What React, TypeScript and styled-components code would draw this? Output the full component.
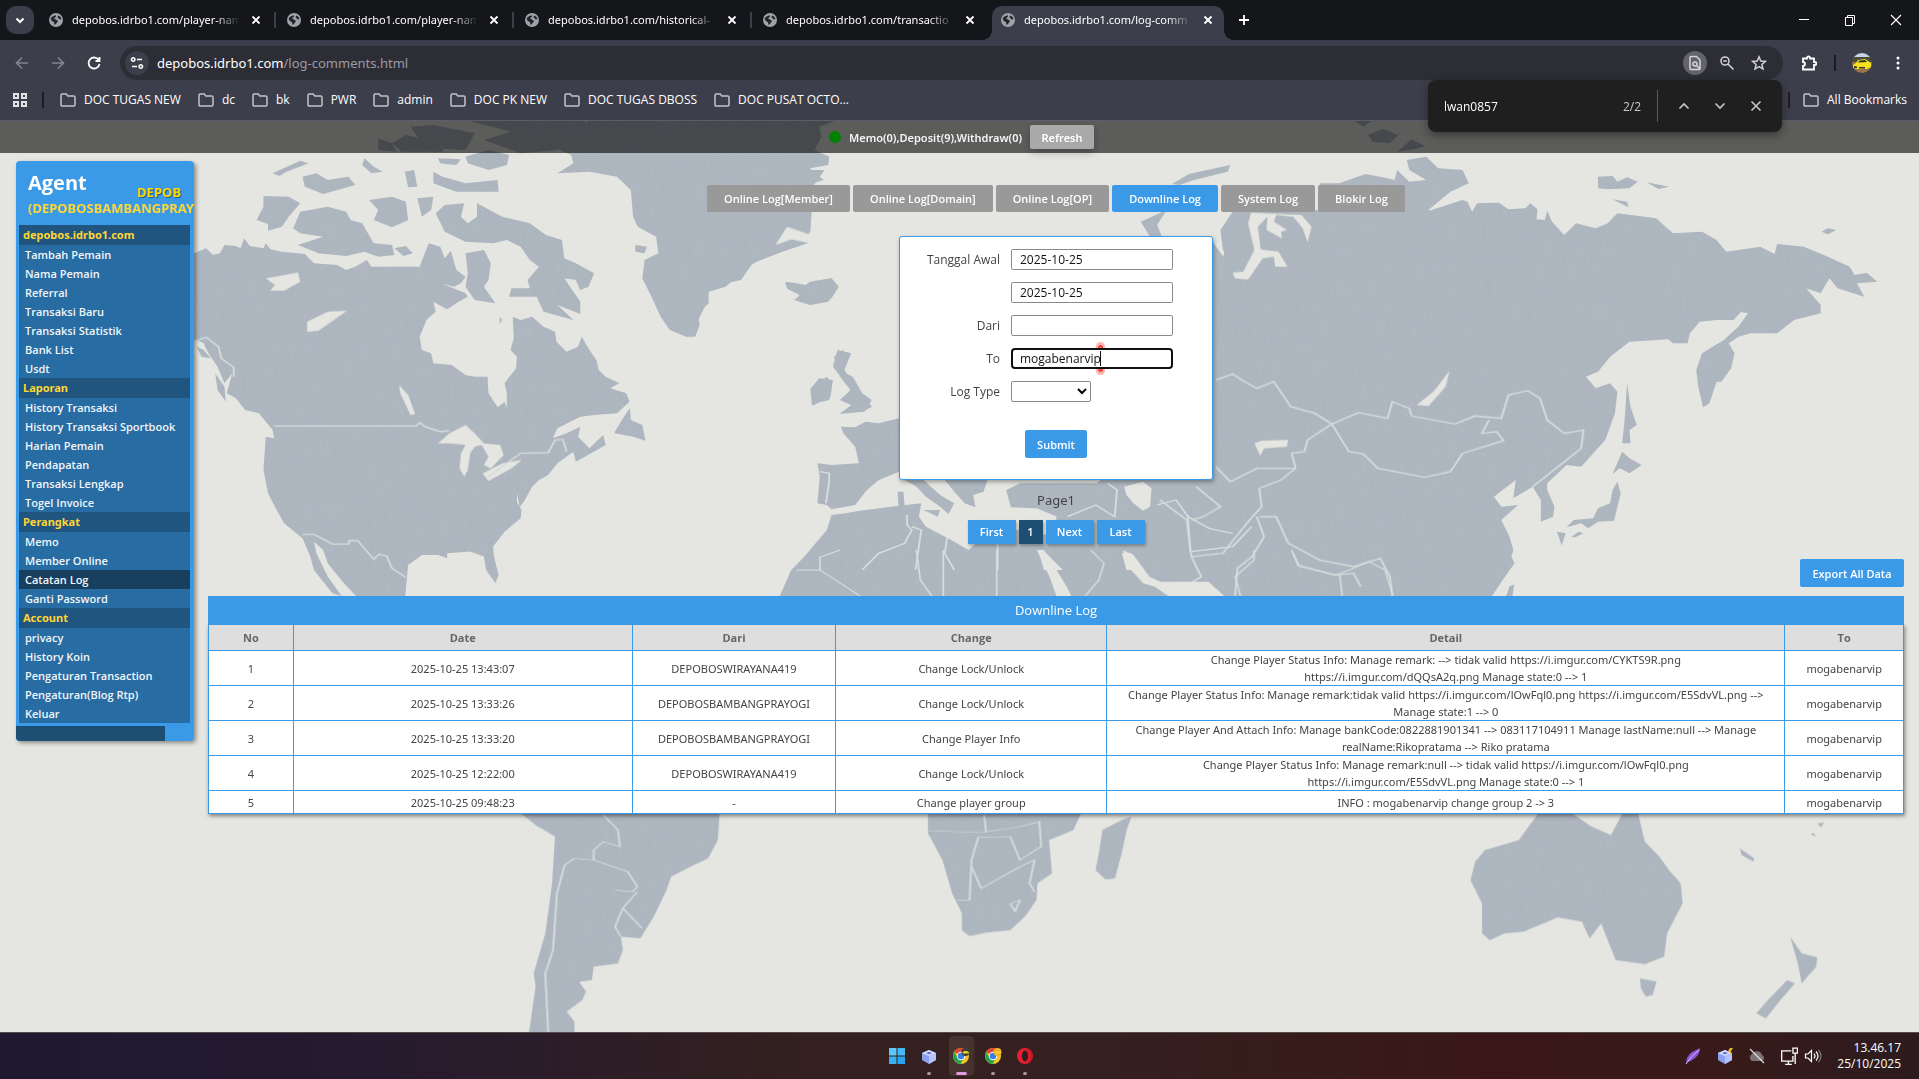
import React from "react";
import styled, { createGlobalStyle, css } from "styled-components";

const BLUE = "#3b9ae8";
const NAVY = "#1d4e74";
const FONT = '"Open Sans", "Noto Sans", sans-serif';
const FONT_WIDE = '"Noto Sans", "Open Sans", sans-serif';

const Global = createGlobalStyle`
  *, *::before, *::after { box-sizing: border-box; }
  body { margin: 0; font-family: ${FONT}; font-size: 12px; }
  button, input, select { font-family: inherit; font-size: inherit; margin: 0; }
  button { border: 0; padding: 0; background: none; color: inherit; }
  a { color: inherit; text-decoration: none; }
  ul { list-style: none; margin: 0; padding: 0; }
`;

const Screen = styled.div`
  display: flex;
  flex-direction: column;
  min-height: 100vh;
`;

/* ---------- browser frame ---------- */

const TabStrip = styled.div`
  display: flex;
  height: 40px;
  padding: 6px 0 0 6px;
  background: #15161a;
  color: #fff;
`;

const TabSearch = styled.button`
  display: grid;
  place-items: center;
  width: 28px;
  height: 28px;
  margin-right: 6px;
  border-radius: 10px;
  background: #3d3e4b;
`;

const Tab = styled.div<{ $active?: boolean; $divider?: boolean }>`
  position: relative;
  display: flex;
  align-items: center;
  gap: 8px;
  width: 232px;
  height: 34px;
  margin-right: 6px;
  padding: 0 8px 6px;
  border-radius: 10px 10px 0 0;
  ${(p) =>
    p.$active &&
    css`
      background: #3d3e4b;
      &::before,
      &::after {
        content: "";
        position: absolute;
        bottom: 0;
        width: 10px;
        height: 10px;
      }
      &::before {
        left: -10px;
        background: radial-gradient(circle at 0 0, transparent 10px, #3d3e4b 10px);
      }
      &::after {
        right: -10px;
        background: radial-gradient(circle at 100% 0, transparent 10px, #3d3e4b 10px);
      }
    `}
  ${(p) =>
    p.$divider &&
    css`
      &::after {
        content: "";
        position: absolute;
        right: -4px;
        top: 6px;
        width: 2px;
        height: 16px;
        background: #3d3e4b;
      }
    `}
`;

const TabTitle = styled.a`
  flex: 1;
  overflow: hidden;
  white-space: nowrap;
  font-family: ${FONT_WIDE};
  font-size: 11px;
  line-height: 20px;
  mask-image: linear-gradient(90deg, #000 85%, transparent);
`;

const IconButton = styled.button<{ $w: number }>`
  display: grid;
  place-items: center;
  flex: none;
  width: ${(p) => p.$w}px;
  height: 28px;
`;

const TabClose = styled.button`
  display: grid;
  place-items: center;
  width: 16px;
  height: 16px;
`;

const WindowButtons = styled.div`
  display: flex;
  margin-left: auto;
`;

const Toolbar = styled.div`
  display: flex;
  align-items: center;
  height: 46px;
  padding: 0 4px;
  background: #3d3e4b;
  color: #fff;
`;

const AddressBar = styled.div`
  display: flex;
  align-items: center;
  flex: 1;
  height: 34px;
  margin: 0 8px;
  padding: 0 12px 0 5px;
  gap: 8px;
  border-radius: 17px;
  background: #2d2d36;
`;

const Round = styled.button<{ $bg: string }>`
  display: grid;
  place-items: center;
  width: 24px;
  height: 24px;
  border-radius: 50%;
  background: ${(p) => p.$bg};
`;

const Url = styled.div`
  flex: 1;
  font-family: ${FONT_WIDE};
  font-size: 13px;
  color: #9a9ba4;
  b { font-weight: 400; color: #fff; }
`;

const Divider = styled.span`
  width: 2px;
  height: 16px;
  background: #1c1d22;
`;

const DividerSlot = styled.span<{ $w: number }>`
  display: grid;
  place-items: center;
  width: ${(p) => p.$w}px;
`;

const Bookmarks = styled.nav`
  display: flex;
  align-items: center;
  height: 35px;
  padding: 0 12px 6px;
  background: #3d3e4b;
  border-bottom: 1px solid #5d5e6b;
  color: #fff;
`;

const BookmarkList = styled.div`
  display: flex;
  gap: 17px;
  padding-left: 2px;
`;

const Bookmark = styled.a`
  display: flex;
  align-items: center;
  gap: 8px;
  line-height: 16px;
  white-space: nowrap;
`;

const BookmarkEnd = styled.div`
  display: flex;
  align-items: center;
  gap: 13px;
  margin-left: auto;
`;

const FindAnchor = styled.div`
  position: relative;
  z-index: 2;
`;

const FindBar = styled.form`
  position: absolute;
  top: -41px;
  right: 137px;
  display: flex;
  align-items: center;
  width: 354px;
  height: 52px;
  padding: 0 8px 0 16px;
  border-radius: 8px;
  background: #1f1f1f;
  color: #fff;
  box-shadow: 0 3px 8px rgba(0, 0, 0, 0.4);
`;

const FindInput = styled.input`
  flex: 1;
  min-width: 0;
  border: 0;
  padding: 0;
  outline: 0;
  background: none;
  color: #fff;
`;

const FindCount = styled.span`
  padding-right: 16px;
  color: #c8c8c8;
`;

const FindRule = styled.span`
  width: 1px;
  height: 32px;
  margin-right: 8px;
  background: #5a5a5a;
`;

/* ---------- agent page ---------- */

const Page = styled.div`
  position: relative;
  isolation: isolate;
  flex: 1;
  background: #e5e6e1;
  overflow: hidden;
`;

const MapSvg = styled.svg`
  position: absolute;
  inset: 0;
  z-index: -1;
  width: 100%;
  height: 100%;
`;

const StatusBar = styled.header`
  display: flex;
  align-items: center;
  justify-content: center;
  height: 32px;
  padding-left: 4px;
  background: rgba(0, 0, 0, 0.6);
  color: #f4f4f4;
  font-family: ${FONT_WIDE};
  font-size: 11px;
  font-weight: 600;
`;

const Dot = styled.span`
  width: 12px;
  height: 12px;
  margin-right: 8px;
  border-radius: 50%;
  background: #008200;
`;

const Refresh = styled.button`
  width: 64px;
  height: 24px;
  margin-left: 8px;
  border-radius: 2px;
  background: #a9a9a9;
  color: #fff;
  font-weight: 600;
  box-shadow: 0 3px 8px rgba(0, 0, 0, 0.25);
`;

const Columns = styled.div`
  display: grid;
  grid-template-columns: 178px minmax(0, 1fr);
  align-items: start;
  gap: 14px;
  padding: 0 15px 0 16px;
`;

const Sidebar = styled.aside`
  margin-top: 8px;
  border-radius: 4px;
  overflow: hidden;
  background: ${BLUE};
  box-shadow: 2px 2px 4px rgba(0, 0, 0, 0.4);
`;

const Brand = styled.div`
  position: relative;
  height: 64px;
  padding: 8px 0 0 12px;
  white-space: nowrap;
`;

const BrandName = styled.h1`
  margin: 0;
  font-size: 20px;
  line-height: 28px;
  font-weight: 700;
  color: #fff;
`;

const BrandUser = styled.div`
  margin-top: 3px;
  font-family: ${FONT_WIDE};
  font-size: 13px;
  line-height: 16px;
  font-weight: 700;
  color: #ffd633;
`;

const BrandMarquee = styled.span`
  position: absolute;
  left: 121px;
  top: 23px;
  font-size: 13px;
  line-height: 16px;
  font-weight: 700;
  color: #ffd700;
  text-shadow: 1px 1px 1px rgba(0, 0, 0, 0.4);
`;

const Menu = styled.ul`
  margin: 0 4px 3px 3px;
  background: #276ca2;
  font-size: 11px;
`;

const MenuHead = styled.li`
  padding-left: 4px;
  background: #20557f;
  color: #ffd633;
  font-family: ${FONT_WIDE};
  font-weight: 700;
  line-height: 20px;
`;

const MenuItem = styled.li<{ $on: boolean }>`
  padding-left: 6px;
  color: #f2f6fa;
  font-weight: 600;
  line-height: 19px;
  ${(p) => p.$on && "background: #193f5f;"}
`;

const MarqueeBar = styled.div`
  width: 149px;
  height: 15px;
  background: ${NAVY};
`;

const Main = styled.main`
  display: flex;
  flex-direction: column;
  align-items: center;
  padding-top: 32px;
`;

const LogTabs = styled.nav`
  display: flex;
  gap: 3px;
`;

const LogTab = styled.a<{ $on: boolean }>`
  padding: 0 17px;
  border-radius: 2px;
  background: ${(p) => (p.$on ? BLUE : "#999")};
  color: #fff;
  font-weight: 600;
  font-size: 11px;
  line-height: 27px;
`;

const Search = styled.form`
  display: flex;
  flex-direction: column;
  gap: 12px;
  width: 314px;
  margin-top: 24px;
  padding: 12px 0 21px;
  border: 1px solid ${BLUE};
  border-radius: 3px;
  background: #fff;
  color: #444;
  box-shadow: 1px 2px 4px rgba(0, 0, 0, 0.35);
`;

const Field = styled.div`
  position: relative;
  display: grid;
  grid-template-columns: 100px 1fr;
  column-gap: 11px;
  align-items: center;
  label { text-align: right; }
`;

const TextBox = styled.input<{ $focus?: boolean }>`
  width: 162px;
  height: 21px;
  padding: 0 8px;
  border: 1px solid #8a8a8a;
  border-radius: 2px;
  background: #fff;
  color: #111;
  ${(p) =>
    p.$focus &&
    css`
      padding: 0 7px;
      border: 2px solid #101010;
      border-radius: 4px;
    `}
`;

const TypeSelect = styled.select`
  width: 80px;
  height: 21px;
  border: 1px solid #8a8a8a;
  border-radius: 2px;
  background: #fff;
`;

const Caret = styled.span`
  position: absolute;
  left: 200px;
  top: 3px;
  width: 1px;
  height: 15px;
  background: #111;
  &::before,
  &::after {
    content: "";
    position: absolute;
    left: -4px;
    width: 9px;
    height: 6px;
    background: radial-gradient(circle at 50% 100%, #f0524a 3px, #ffb4b0 3px);
    border-radius: 5px 5px 0 0;
  }
  &::before { top: -9px; }
  &::after { bottom: -9px; transform: rotate(180deg); }
`;

const Submit = styled.button`
  align-self: center;
  width: 62px;
  height: 28px;
  margin-top: 16px;
  border-radius: 2px;
  background: ${BLUE};
  color: #fff;
  font-size: 11px;
  font-weight: 600;
`;

const PageLabel = styled.p`
  margin: 10px 0;
  font-family: ${FONT_WIDE};
  font-size: 13px;
  line-height: 20px;
  color: #444;
`;

const Pager = styled.nav`
  display: flex;
  gap: 3px;
`;

const PageLink = styled.a<{ $on: boolean }>`
  width: ${(p) => (p.$on ? 24 : 48)}px;
  background: ${(p) => (p.$on ? NAVY : BLUE)};
  color: #fff;
  font-size: 11px;
  font-weight: 600;
  line-height: 24px;
  text-align: center;
  box-shadow: 1px 2px 3px rgba(0, 0, 0, 0.3);
`;

const Export = styled.button`
  align-self: flex-end;
  width: 104px;
  height: 28px;
  margin: 15px 0 9px;
  border-radius: 2px;
  background: ${BLUE};
  color: #fff;
  font-size: 11px;
  font-weight: 600;
  white-space: nowrap;
`;

const LogTable = styled.table`
  width: 100%;
  table-layout: fixed;
  border-collapse: collapse;
  background: #fff;
  color: #444;
  text-align: center;
  font-size: 11px;
  line-height: 17px;
  box-shadow: 1px 2px 4px rgba(0, 0, 0, 0.45);
  caption {
    background: ${BLUE};
    color: #fff;
    font-size: 13px;
    line-height: 28px;
  }
  th, td { padding: 0 4px; border: 1px solid ${BLUE}; }
  th { height: 26px; background: #dedede; color: #666; font-weight: 700; }
  td { height: 23px; font-family: ${FONT_WIDE}; }
`;

const Col = styled.col<{ $w: number }>`
  width: ${(p) => p.$w}%;
`;

const Line = styled.span`
  display: block;
  white-space: nowrap;
`;

/* ---------- taskbar ---------- */

const Taskbar = styled.footer`
  display: grid;
  grid-template-columns: 1fr auto 1fr;
  align-items: center;
  height: 47px;
  border-top: 1px solid #574a4a;
  background: linear-gradient(90deg, #1e1930 0%, #251a30 18%, #33201f 42%, #34201f 58%, #3a1717 78%, #371a19 90%, #2c1b1e 100%);
  color: #fff;
`;

const Apps = styled.div`
  grid-column: 2;
  display: flex;
  gap: 8px;
  padding-left: 3px;
`;

const TaskApp = styled.button<{ $on?: boolean; $run?: boolean }>`
  position: relative;
  display: grid;
  place-items: center;
  width: 24px;
  height: 40px;
  border-radius: 4px;
  ${(p) => p.$on && "background: #46332f; box-shadow: 3px 0 0 -1px #3e2c29;"}
  ${(p) =>
    p.$run &&
    css`
      &::after {
        content: "";
        position: absolute;
        bottom: 1px;
        width: ${p.$on ? 11 : 4}px;
        height: 3px;
        border-radius: 2px;
        background: ${p.$on ? "#dc9be0" : "#a39b9b"};
      }
    `}
`;

const Tray = styled.div`
  display: flex;
  align-items: center;
  justify-content: flex-end;
  gap: 14px;
  padding-right: 18px;
`;

const Status = styled.div`
  display: flex;
  align-items: center;
  gap: 6px;
`;

const Clock = styled.time`
  width: 65px;
  font-size: 12px;
  line-height: 16px;
  text-align: right;
`;

/* ---------- icons ---------- */

const Stroke = ({ d, s = 16, w = 2, c = "currentColor" }: { d: string; s?: number; w?: number; c?: string }) => (
  <svg width={s} height={s} viewBox="0 0 16 16" fill="none" stroke={c} strokeWidth={w} aria-hidden="true">
    <path d={d} />
  </svg>
);

const Globe = () => (
  <svg width="16" height="16" viewBox="0 0 16 16" aria-hidden="true">
    <circle cx="8" cy="8" r="7" fill="#9fa3a7" />
    <path d="M2.600 6.200Q4 4 7.500 3.200q1.200.6.200 1.800L6 6.200 7.800 7.500q2 .3 2 2L8.500 11.200 6.800 13q-.8-.8-.6-2.400L3.600 8.800zM10.500 3.400q2 1 2.900 3.200l-1.200 1.200-1.800-1.500-1-1.200z" fill="#24252b" />
  </svg>
);

const Folder = () => (
  <svg width="16" height="14" viewBox="0 0 16 14" fill="none" stroke="#c3c3c8" strokeWidth="1.5" aria-hidden="true">
    <path d="M1 2.200q0-1.200 1.200-1.200h4l1.600 2h6q1.200 0 1.200 1.200v7.600q0 1.200-1.200 1.200H2.200Q1 13 1 11.800z" />
  </svg>
);

const Chrome = ({ badge }: { badge: string }) => (
  <svg width="18" height="18" viewBox="0 0 18 18" aria-hidden="true">
    <circle cx="9" cy="9" r="8" fill="#f7c52b" />
    <path d="M9 9L2.100 5A8 8 0 0 1 16 5H9z" fill="#e24335" />
    <path d="M2.100 5A8 8 0 0 0 8.500 17L12 11 6 11z" fill="#2ba24c" />
    <circle cx="9" cy="9" r="4.200" fill="#fff" />
    <circle cx="9" cy="9" r="3.300" fill="#3a7de8" />
    <circle cx="13.500" cy="5" r="4" fill={badge} />
    <path d="M10.500 5.500l1.500-1.500h3l2 1.500v1h-6.500z" fill="#f2cf2c" />
  </svg>
);

const Box = ({ spark }: { spark?: boolean }) => (
  <svg width="18" height="18" viewBox="0 0 18 18" aria-hidden="true">
    <path d="M2 6l7-3 7 3v7l-7 4-7-4z" fill="#8f9ff0" />
    <path d="M2 6l7-3 7 3-7 3z" fill="#d5dcff" />
    <path d="M9 9l7-3v7l-7 4z" fill="#b4c2ff" />
    <path d="M6 6l3-1 3 1-3 1.200z" fill="#5463b8" />
    {spark && <path d="M12 4l2-3h3l-2 3v3z" fill="#f0b429" />}
  </svg>
);

/* ---------- world map backdrop ---------- */

const LAND = "#adb6bf";
const SEA = "#e5e6e1";

const P = ({ p, sea }: { p: string; sea?: boolean }) => <polygon points={p} fill={sea ? SEA : LAND} />;

const northAmerica = [
  "0,405 35,385 50,405 65,400 75,375 100,378 110,385 118,355 130,378 160,385 165,370 175,388 200,395 250,402 270,430 320,435 340,450 360,440 385,420 395,440 500,440 520,370 545,380 555,415 568,392 580,450 600,470 590,490 575,500 550,492 600,520 605,530 585,545 560,568 530,545 535,575 515,600 500,650 505,690 525,700 530,730 570,735 600,765 620,770 648,770 650,820 670,862 685,845 690,865 690,820 685,790 710,745 712,710 698,690 705,655 703,590 720,600 745,590 770,620 795,635 798,665 820,695 845,680 853,650 870,690 885,720 890,750 905,770 935,790 915,805 950,820 957,845 930,880 880,885 850,890 800,925 790,955 820,940 850,920 845,950 870,985 900,945 905,975 860,1010 840,1025 835,995 800,1030 780,1065 760,1080 745,1100 727,1145 718,1160 712,1120 712,1145 722,1170 720,1195 685,1235 660,1280 662,1310 672,1365 665,1390 645,1350 640,1310 610,1295 560,1300 560,1315 540,1305 505,1305 475,1335 468,1440 370,1440 335,1390 300,1330 290,1290 270,1265 275,1300 300,1370 330,1428 310,1420 270,1350 262,1310 245,1255 205,1210 185,1160 170,1120 160,1050 165,950 183,955 180,930 150,880 120,870 100,835 80,820 92,760 75,790 60,740 40,700 30,670 15,660 0,665",
  "925,935 945,890 958,865 960,900 985,915 992,962 965,950 925,940",
  "535,280 555,255 597,250 590,290 605,310 625,290 625,250 680,290 740,310 775,345 810,360 815,415 840,430 880,460 868,500 850,510 840,480 815,475 850,545 850,582 800,555 835,600 770,575 755,530 695,530 700,505 740,505 735,480 760,440 740,420 720,380 690,360 660,370 600,365 555,335",
  "600,400 640,390 655,430 650,480 640,500 665,550 620,540 600,500 605,460",
  "240,275 300,260 340,275 350,300 375,310 400,370 440,375 445,405 410,410 380,395 340,408 280,400 235,375 290,350 240,340 225,325",
  "160,228 215,230 240,250 215,290 200,320 170,332 170,312 145,300 160,260",
  "390,240 440,230 470,245 475,300 440,322 400,300 410,270",
  "445,385 470,378 485,400 465,408",
  "245,170 275,160 300,180 345,170 360,195 290,222 250,200",
  "530,155 550,170 600,190 670,180 672,215 580,215 530,190",
  "180,160 240,122 258,130 210,155 195,168",
  "468,155 488,150 495,200 475,202",
  "540,115 590,118 580,135 545,130",
  "600,110 650,90 695,105 690,135 650,150 605,130",
  "380,115 400,140 420,155 395,160 375,135",
  "495,235 530,230 525,270 505,290",
  "440,70 470,45 500,55 560,60 550,95 460,95",
  "480,20 530,15 620,40 600,90 540,85 500,60",
  "410,55 440,70 450,95 410,90",
  "600,0 860,0 860,30 800,90 720,100 640,60 700,35",
  "870,0 1410,0 1370,20 1375,50 1360,90 1392,110 1390,135 1350,145 1380,180 1345,195 1310,250 1350,310 1345,370 1290,395 1225,430 1200,480 1150,495 1128,510 1130,550 1105,580 1110,615 1100,650 1080,650 1045,630 1025,590 1005,530 985,475 990,420 1020,400 1015,350 975,320 965,290 960,210 930,170 870,155 800,160 835,130 830,105 790,80",
  "970,375 995,380 990,400 970,395",
  "1297,485 1320,490 1330,508 1350,485 1395,475 1412,500 1390,545 1350,555 1315,540 1330,525 1300,505",
  "1410,690 1440,700 1425,750 1445,790 1470,830 1485,860 1465,875 1415,882 1440,855 1415,840 1440,810 1400,740",
  "1370,775 1400,780 1395,830 1355,857 1355,800",
  "675,590 680,600 674,612",
  "15,680 30,690 45,715 25,710",
  "55,760 75,800 78,845 60,810",
];
const northAmericaLakes = [
  "165,475 235,457 240,485 205,512 175,512 185,495",
  "255,605 300,575 342,572 280,632 255,636",
  "455,795 475,825 490,882 480,885 458,820",
  "540,970 565,940 600,915 620,940 640,970 675,975 683,1005 655,1045 640,1035 650,1010 635,975 620,980 610,1000 605,1050 597,1070 587,1045 590,1000 600,975 570,970",
  "637,1060 680,1030 722,1020 700,1045 650,1083",
  "1275,375 1300,320 1352,345 1345,368 1310,358",
];
const northAmericaLines = [
  "183,918 492,918 500,908 512,920 545,935 565,932",
  "650,1070 720,1000 780,998 795,960 812,958 820,995",
  "245,1243 270,1243 310,1272 345,1272 347,1262 365,1262 400,1318 412,1303 428,1308 440,1345 470,1372",
  "12,662 35,652 62,680 68,715 95,742 95,770",
];

const europe = [
  "0,0 285,0 245,80 258,120 255,185 235,220 155,260 130,285 105,315 75,350 40,365 35,400 0,500",
  "443,745 400,760 372,755 350,772 320,770 325,790 350,830 358,880 300,885 270,880 275,920 270,1000 290,1005 300,1018 350,1005 375,960 400,930 443,905",
  "255,655 290,620 300,640 295,690 258,702",
  "305,560 325,540 330,570 315,600 345,620 365,670 385,690 370,725 320,728 345,705 320,690 340,660 318,620",
  "201,340 225,340 245,345 300,325 315,350 300,385 258,400 225,390 232,375 208,358",
  "455,930 495,930 530,975 560,1000 548,1032 530,1010 500,980 480,950",
  "495,1020 530,1020 525,1040",
  "440,965 452,965 455,1010 442,1010",
  "540,930 630,930 622,965 600,975 605,1012 582,1000 560,965",
  "670,960 700,940 860,940 870,1015 800,1022 785,1045 735,1015 680,1012",
  "300,1035 330,1030 360,1022 440,1008 490,1000 485,1040 500,1070 560,1115 590,1140 620,1105 620,1075 700,1080 740,1095 790,1090 775,1045 870,930 1568,930 1568,1200 218,1200 290,1080",
  "800,930 1568,930 1568,120 1150,120 1130,260 1100,200 1100,930",
  "955,155 1010,120 990,165 1000,200 975,200",
];
const europeSea = [
  "920,950 960,935 978,955 975,1010 960,1022 940,1000 925,975",
  "740,1150 755,1150 790,1200 750,1200",
  "915,1150 935,1150 955,1200 925,1200",
];
const europeLines = [
  "275,905 295,910 295,935 288,1000",
  "460,1035 460,1065 470,1080 455,1120 400,1150 365,1200",
  "470,1070 490,1080 478,1200",
  "652,1080 652,1200",
  "545,1100 540,1150 560,1200",
  "800,1040 860,1005 900,1040 905,960 885,940",
  "990,1005 1030,990 1055,1040 1100,1075 1150,1090",
  "1055,1035 1060,1145 1150,1130 1190,1070",
];

const asia = [
  "115,440 150,420 130,390 125,330 150,275 330,275 330,190 370,190 425,162 470,175 485,180 490,150 515,185 550,180 515,150 510,120 550,110 575,145 625,150 638,190 600,215 550,275 625,240 635,245 645,275 655,250 700,248 720,268 755,265 765,250 780,268 778,298 795,300 800,272 810,305 835,345 860,310 900,325 925,310 945,280 1025,295 1060,340 1120,335 1150,360 1170,395 1240,380 1270,402 1275,372 1330,380 1380,410 1425,440 1435,465 1460,458 1482,485 1440,490 1455,530 1400,505 1383,475 1365,520 1335,505 1365,555 1365,580 1310,600 1275,640 1220,640 1195,650 1175,670 1187,700 1180,745 1160,785 1150,785 1135,850 1122,862 1112,800 1108,750 1120,700 1165,660 1195,620 1215,580 1200,576 1185,600 1150,600 1115,605 1095,640 1090,670 1060,670 1050,658 970,665 930,710 905,755 880,770 900,805 930,790 945,815 940,880 920,960 870,1040 840,1035 800,1090 800,1110 815,1160 812,1190 787,1205 787,1140 770,1100 730,1135 735,1080 690,1130 705,1160 740,1155 705,1200 722,1250 730,1290 720,1340 690,1395 670,1440 160,1440 120,1390 20,1380 0,1355 0,1080 115,1080",
  "965,790 972,860 985,915 970,930 972,970 955,970 960,900",
  "955,995 970,1015 995,1035 970,1060 950,1045 935,1062",
  "945,1085 952,1120 938,1202 905,1205 885,1225 870,1210 840,1222 855,1200 895,1195 905,1165 930,1150 935,1110",
  "820,1235 838,1240 830,1277",
  "850,1250 865,1235 875,1240 858,1252",
  "905,170 935,168 945,185 965,172 987,185 970,205 925,208 905,205",
  "1005,187 1052,200 1030,207",
  "935,238 965,245 968,262",
  "1367,335 1380,325 1397,330 1380,343",
  "25,192 60,162 145,135 140,155 70,180 40,195",
  "430,45 460,27 492,45 475,70 440,65",
  "490,95 520,58 547,78 525,88",
  "400,0 440,0 420,20",
  "715,1430 722,1400 732,1393 728,1430",
];
const asiaSea = [
  "188,278 182,310 195,390 172,455 150,458 155,475 182,478 212,415 235,410 238,440 263,440 245,395 208,388 202,320 222,290 220,330 252,355 250,335 262,330 235,305 240,285 275,290 295,325 305,367 313,320 292,285",
  "530,855 565,815 598,753 590,800 555,858",
  "195,970 210,962 265,960 262,980 215,985 207,1007",
];
const asiaLines = [
  "115,780 150,762 175,785 200,805 235,785 270,860 320,880 355,912 410,878 470,895 480,845 515,865 520,888 610,912 650,888 705,895 720,825 760,812 785,835 800,900 835,940 875,930 870,985 840,1020 770,1100",
  "355,912 390,995 420,1002 450,1045 547,1072 600,1055 625,1000 680,975 710,962 695,935 665,940 680,900",
  "355,912 305,960 298,995 272,1000 280,1045 250,1080 205,1105 210,1160 185,1200 160,1245 130,1300 65,1310 55,1200 0,1140",
  "280,1045 200,1045 145,1085 115,1040",
  "205,1190 240,1190 265,1270 330,1320 400,1340 455,1315 475,1370 480,1428",
  "200,1190 215,1250 190,1310 160,1345 155,1428",
  "275,1300 285,1335 360,1365 400,1360 415,1400",
  "65,1200 90,1190 125,1160 75,1100",
  "65,1310 85,1370 50,1400",
];

const tropicsWest = ["1010,138 1030,60 1065,0 1568,0 1568,138"];
const tropicsEast = ["0,0 800,0 812,40 790,90 770,138 0,138"];

const southern = [
  "125,40 330,40 328,120 318,175 300,200 280,230 275,270 262,350 248,415 228,410 230,450 225,490 200,500 198,540 185,545 192,575 188,600 172,635 180,665 180,700 133,700 140,560 138,520 150,400 157,250 160,110 140,75",
  "545,40 703,40 695,90 670,120 673,220 658,250 657,300 645,350 630,390 605,398 588,408 580,390 580,340 570,280 560,180 545,100",
  "755,50 750,90 745,160 738,235 728,238 718,210 722,150 725,90 745,60",
  "1175,40 1210,40 1230,80 1250,105 1262,40 1278,40 1285,125 1300,170 1310,210 1322,250 1324,310 1308,400 1305,470 1285,492 1255,480 1248,430 1240,370 1228,415 1220,365 1195,352 1160,395 1140,400 1125,420 1117,400 1117,310 1105,240 1110,185 1120,150 1155,120 1165,80",
  "1280,535 1297,545 1293,585 1286,590 1281,565",
  "1435,410 1447,460 1463,472 1462,500 1447,550 1443,490",
  "1432,540 1440,550 1425,600 1410,655 1400,640 1412,600",
  "1383,145 1398,175 1397,185 1385,165",
  "1463,70 1470,68 1467,82",
  "1458,98 1462,108 1457,105",
];
const southernLines = [
  "210,45 225,90 227,140 210,125 200,150 200,180 180,175 170,195 162,280 158,450 150,520 153,695",
  "200,180 235,215 245,260 240,275 222,270",
  "245,275 230,325 222,380 228,410",
  "230,325 250,385",
  "545,92 600,98 640,80 660,65 662,140 640,180 630,110 597,112 590,180 588,300 575,300",
  "590,200 600,265 640,200 655,180 650,250 655,275",
  "603,45 605,95",
  "630,310 640,300 635,335 630,310",
];

const Lines = ({ list, w }: { list: string[]; w: number }) => (
  <g fill="none" stroke="#d5dddc" strokeWidth={w}>
    {list.map((l) => (
      <polyline key={l} points={l} />
    ))}
  </g>
);

const WorldMap = () => (
  <MapSvg viewBox="0 121 1919 911" preserveAspectRatio="none" aria-hidden="true">
    <defs>
      <filter id="linen" x="0" y="0" width="1" height="1">
        <feTurbulence type="fractalNoise" baseFrequency="0.3 0.05" numOctaves="2" seed="4" result="warp" />
        <feColorMatrix in="warp" values="0 0 0 0 0.45  0 0 0 0 0.5  0 0 0 0 0.56  0.7 0 0 0 -0.27" result="tint" />
        <feComposite in="tint" in2="SourceAlpha" operator="in" result="cloth" />
        <feMerge>
          <feMergeNode in="SourceGraphic" />
          <feMergeNode in="cloth" />
        </feMerge>
      </filter>
    </defs>
    <g filter="url(#linen)">
      <g transform="translate(690 170) scale(0.4719 0.3333)">{europe.map((p) => <P key={p} p={p} />)}</g>
      <g transform="translate(190 120) scale(0.4592 0.3333)">{northAmerica.map((p) => <P key={p} p={p} />)}</g>
      <g transform="translate(200 550) scale(0.574 0.3333)">{tropicsWest.map((p) => <P key={p} p={p} />)}</g>
      <g transform="translate(1080 550) scale(0.5351 0.3333)">{tropicsEast.map((p) => <P key={p} p={p} />)}</g>
      <g transform="translate(1160 120) scale(0.484 0.3333)">{asia.map((p) => <P key={p} p={p} />)}</g>
      <g transform="translate(400 800) scale(0.9687 0.3333)">{southern.map((p) => <P key={p} p={p} />)}</g>
    </g>
    <g transform="translate(190 120) scale(0.4592 0.3333)">
      {northAmericaLakes.map((p) => <P key={p} p={p} sea />)}
      <Lines list={northAmericaLines} w={4} />
    </g>
    <g transform="translate(690 170) scale(0.4719 0.3333)">
      {europeSea.map((p) => <P key={p} p={p} sea />)}
      <Lines list={europeLines} w={4} />
    </g>
    <g transform="translate(1160 120) scale(0.484 0.3333)">
      {asiaSea.map((p) => <P key={p} p={p} sea />)}
      <Lines list={asiaLines} w={4} />
    </g>
    <g transform="translate(200 550) scale(0.574 0.3333)">
      <P sea p="1458,0 1470,0 1485,40 1510,110 1518,138 1492,138 1480,80" />
      <Lines w={3} list={["1040,60 1080,60 1080,22 1115,0", "1080,60 1150,138", "1248,0 1255,90 1275,138", "1295,0 1295,138", "1388,0 1388,138"]} />
    </g>
    <g transform="translate(1080 550) scale(0.5351 0.3333)">
      <P sea p="80,0 100,15 130,80 150,95 240,95 270,138 165,138 140,110 118,100 90,50" />
      <Lines w={3} list={["20,0 45,40 35,90 10,138", "325,0 325,30 290,80 300,138", "395,0 410,50 480,75 540,35 570,60 585,138", "485,70 490,138"]} />
    </g>
    <g transform="translate(400 800) scale(0.9687 0.3333)">
      <Lines list={southernLines} w={2} />
    </g>
  </MapSvg>
);

/* ---------- data ---------- */

const tabs = ["player-nam", "player-nam", "historical-", "transactio", "log-comm"];
const bookmarks = ["DOC TUGAS NEW", "dc", "bk", "PWR", "admin", "DOC PK NEW", "DOC TUGAS DBOSS", "DOC PUSAT OCTO..."];

const menu: [string, string[]][] = [
  ["depobos.idrbo1.com", ["Tambah Pemain", "Nama Pemain", "Referral", "Transaksi Baru", "Transaksi Statistik", "Bank List", "Usdt"]],
  ["Laporan", ["History Transaksi", "History Transaksi Sportbook", "Harian Pemain", "Pendapatan", "Transaksi Lengkap", "Togel Invoice"]],
  ["Perangkat", ["Memo", "Member Online", "Catatan Log", "Ganti Password"]],
  ["Account", ["privacy", "History Koin", "Pengaturan Transaction", "Pengaturan(Blog Rtp)", "Keluar"]],
];

const logTabs = ["Online Log[Member]", "Online Log[Domain]", "Online Log[OP]", "Downline Log", "System Log", "Blokir Log"];
const columns: [string, number][] = [["No", 5], ["Date", 20], ["Dari", 12], ["Change", 16], ["Detail", 40], ["To", 7]];

const rows: { date: string; from: string; change: string; detail: string[] }[] = [
  {
    date: "2025-10-25 13:43:07",
    from: "DEPOBOSWIRAYANA419",
    change: "Change Lock/Unlock",
    detail: ["Change Player Status Info: Manage remark: --> tidak valid https://i.imgur.com/CYKTS9R.png", "https://i.imgur.com/dQQsA2q.png Manage state:0 --> 1"],
  },
  {
    date: "2025-10-25 13:33:26",
    from: "DEPOBOSBAMBANGPRAYOGI",
    change: "Change Lock/Unlock",
    detail: ["Change Player Status Info: Manage remark:tidak valid https://i.imgur.com/lOwFql0.png https://i.imgur.com/E5SdvVL.png -->", "Manage state:1 --> 0"],
  },
  {
    date: "2025-10-25 13:33:20",
    from: "DEPOBOSBAMBANGPRAYOGI",
    change: "Change Player Info",
    detail: ["Change Player And Attach Info: Manage bankCode:0822881901341 --> 083117104911 Manage lastName:null --> Manage", "realName:Rikopratama --> Riko pratama"],
  },
  {
    date: "2025-10-25 12:22:00",
    from: "DEPOBOSWIRAYANA419",
    change: "Change Lock/Unlock",
    detail: ["Change Player Status Info: Manage remark:null --> tidak valid https://i.imgur.com/lOwFql0.png", "https://i.imgur.com/E5SdvVL.png Manage state:0 --> 1"],
  },
  { date: "2025-10-25 09:48:23", from: "-", change: "Change player group", detail: ["INFO : mogabenarvip change group 2 -> 3"] },
];

/* ---------- sections ---------- */

const BrowserFrame = () => (
  <>
    <TabStrip>
      <TabSearch aria-label="Search tabs">
        <Stroke d="M4.500 6.500L8 10l3.500-3.500" />
      </TabSearch>
      {tabs.map((t, i) => (
        <Tab key={i} $active={i === 4} $divider={i < 3}>
          <Globe />
          <TabTitle href="#">depobos.idrbo1.com/{t}</TabTitle>
          <TabClose aria-label="Close tab">
            <Stroke d="M4.500 4.500l7 7M11.500 4.500l-7 7" w={1.8} />
          </TabClose>
        </Tab>
      ))}
      <IconButton $w={28} aria-label="New tab">
        <Stroke d="M8 3v10M3 8h10" w={1.8} />
      </IconButton>
      <WindowButtons>
        <IconButton $w={46} aria-label="Minimize"><Stroke d="M3 7.500h10" w={1} /></IconButton>
        <IconButton $w={46} aria-label="Restore"><Stroke d="M3.500 5.500h7v8h-7zM5.500 5.500v-2h7v8h-2" w={1} /></IconButton>
        <IconButton $w={46} aria-label="Close"><Stroke d="M3 3l10 10M13 3L3 13" w={1.2} /></IconButton>
      </WindowButtons>
    </TabStrip>
    <Toolbar>
      <IconButton $w={36} aria-label="Back"><Stroke d="M14 8H2.500M8 2.500L2.500 8 8 13.500" w={1.6} c="#84858f" /></IconButton>
      <IconButton $w={36} aria-label="Forward"><Stroke d="M2 8h11.500M8 2.500L13.500 8 8 13.500" w={1.6} c="#84858f" /></IconButton>
      <IconButton $w={36} aria-label="Reload"><Stroke d="M13 5.500A5.500 5.500 0 1 0 13.500 9M13.500 2v4h-4" w={1.8} /></IconButton>
      <AddressBar>
        <Round $bg="#3d3e4b" aria-label="Site information">
          <Stroke d="M2.500 4.500a1.700 1.700 0 1 0 3.400 0a1.700 1.700 0 1 0-3.400 0M8 4.500h5M10.100 11.500a1.700 1.700 0 1 0 3.400 0a1.700 1.700 0 1 0-3.400 0M3 11.500h5" w={1.6} />
        </Round>
        <Url><b>depobos.idrbo1.com</b>/log-comments.html</Url>
        <Round $bg="#62636c" aria-label="Find in page">
          <Stroke d="M9.500 1.500H4q-1 0-1 1v11q0 1 1 1h8q1 0 1-1V5zM6 9a2 2 0 1 0 4 0a2 2 0 1 0-4 0M9.500 10.500l3.500 3.500" w={1.5} c="#d5d5d8" />
        </Round>
        <Round $bg="none" aria-label="Zoom"><Stroke d="M2 6a4 4 0 1 0 8 0a4 4 0 1 0-8 0M9 9l5.500 5.500M4.200 6h3.600" w={1.6} c="#d0d0d4" /></Round>
        <Round $bg="none" aria-label="Bookmark"><Stroke d="M8 1.800l1.800 4.200 4.600.4-3.500 3 1.100 4.500L8 11.500l-4 2.400 1.100-4.500-3.500-3 4.600-.4z" w={1.5} c="#d0d0d4" /></Round>
      </AddressBar>
      <IconButton $w={36} aria-label="Extensions"><Stroke d="M2 3.500h4V3a1.500 1.500 0 0 1 3 0v.5h4V7h.8a1.500 1.500 0 0 1 0 3H13v4.500H2V11q2 0 2-2T2 7z" w={1.8} /></IconButton>
      <DividerSlot $w={16}><Divider /></DividerSlot>
      <IconButton $w={38} aria-label="Profile">
        <svg width="20" height="20" viewBox="0 0 20 20" aria-hidden="true">
          <clipPath id="face"><circle cx="10" cy="10" r="10" /></clipPath>
          <g clipPath="url(#face)">
            <path fill="#c5d4e4" d="M0 0h20v5H0z" />
            <path fill="#4a4d3c" d="M0 4h20v6H0z" />
            <path fill="#9a7448" d="M0 9h20v11H0z" />
            <path fill="#f2e21c" d="M1 12l3-2 2-3 7-1 3 2 3 2v4l-4 2H5l-4-1z" />
            <path fill="#30322c" d="M6 9.500l1.500-2 5.500-.5 2 2zM2 13l3 .5v1.500H2zM7 14h6v1.500H7z" />
          </g>
        </svg>
      </IconButton>
      <IconButton $w={34} aria-label="Menu">
        <svg width="16" height="18" viewBox="0 0 16 18" fill="#fff" aria-hidden="true">
          <circle cx="8" cy="4" r="1.500" /><circle cx="8" cy="9" r="1.500" /><circle cx="8" cy="14" r="1.500" />
        </svg>
      </IconButton>
    </Toolbar>
    <Bookmarks>
      <Stroke d="M2 2h4v4H2zM10 2h4v4h-4zM2 10h4v4H2zM10 10h4v4h-4z" w={2} c="#e3e3e6" />
      <DividerSlot $w={30}><Divider /></DividerSlot>
      <BookmarkList>
        {bookmarks.map((b) => (
          <Bookmark key={b} href="#"><Folder />{b}</Bookmark>
        ))}
      </BookmarkList>
      <BookmarkEnd>
        <Divider />
        <Bookmark href="#"><Folder />All Bookmarks</Bookmark>
      </BookmarkEnd>
    </Bookmarks>
    <FindAnchor>
      <FindBar>
        <FindInput aria-label="Find in page" defaultValue="lwan0857" />
        <FindCount>2/2</FindCount>
        <FindRule />
        <IconButton type="button" $w={36} aria-label="Previous"><Stroke d="M3.500 10.500L8 6l4.500 4.500" w={1.6} c="#c8c8c8" /></IconButton>
        <IconButton type="button" $w={36} aria-label="Next"><Stroke d="M3.500 5.500L8 10l4.500-4.500" w={1.6} c="#c8c8c8" /></IconButton>
        <IconButton type="button" $w={36} aria-label="Close find bar"><Stroke d="M3.500 3.500l9 9M12.500 3.500l-9 9" w={1.6} c="#c8c8c8" /></IconButton>
      </FindBar>
    </FindAnchor>
  </>
);

const AgentMenu = () => (
  <Sidebar>
    <Brand>
      <BrandName>Agent</BrandName>
      <BrandUser>(DEPOBOSBAMBANGPRAY</BrandUser>
      <BrandMarquee>DEPOB</BrandMarquee>
    </Brand>
    <Menu>
      {menu.map(([head, items]) => (
        <React.Fragment key={head}>
          <MenuHead>{head}</MenuHead>
          {items.map((it) => (
            <MenuItem key={it} $on={it === "Catatan Log"}><a href="#">{it}</a></MenuItem>
          ))}
        </React.Fragment>
      ))}
    </Menu>
    <MarqueeBar />
  </Sidebar>
);

const SearchForm = () => (
  <Search>
    <Field><label htmlFor="start">Tanggal Awal</label><TextBox id="start" defaultValue="2025-10-25" /></Field>
    <Field><label htmlFor="end" aria-label="Tanggal Akhir" /><TextBox id="end" defaultValue="2025-10-25" /></Field>
    <Field><label htmlFor="from">Dari</label><TextBox id="from" /></Field>
    <Field><label htmlFor="to">To</label><TextBox id="to" $focus defaultValue="mogabenarvip" /><Caret /></Field>
    <Field><label htmlFor="type">Log Type</label><TypeSelect id="type"><option></option></TypeSelect></Field>
    <Submit type="button">Submit</Submit>
  </Search>
);

const LogList = () => (
  <LogTable>
    <caption>Downline Log</caption>
    <colgroup>{columns.map(([c, w]) => <Col key={c} $w={w} />)}</colgroup>
    <thead><tr>{columns.map(([c]) => <th key={c} scope="col">{c}</th>)}</tr></thead>
    <tbody>
      {rows.map((r, i) => (
        <tr key={r.date}>
          <td>{i + 1}</td>
          <td>{r.date}</td>
          <td>{r.from}</td>
          <td>{r.change}</td>
          <td>{r.detail.map((l) => <Line key={l}>{l}</Line>)}</td>
          <td>mogabenarvip</td>
        </tr>
      ))}
    </tbody>
  </LogTable>
);

const WindowsTaskbar = () => (
  <Taskbar>
    <Apps>
      <TaskApp aria-label="Start">
        <svg width="16" height="16" viewBox="0 0 16 16" aria-hidden="true">
          <path fill="#5cc8f8" d="M0 0h7.500v7.500H0z" /><path fill="#45b8f5" d="M8.500 0H16v7.500H8.500z" />
          <path fill="#3ab0f3" d="M0 8.500h7.500V16H0z" /><path fill="#2aa2ef" d="M8.500 8.500H16V16H8.500z" />
        </svg>
      </TaskApp>
      <TaskApp $run aria-label="VirtualBox"><Box /></TaskApp>
      <TaskApp $run $on aria-label="Chrome"><Chrome badge="#3c3f33" /></TaskApp>
      <TaskApp $run aria-label="Chrome profile 2"><Chrome badge="#eeb02c" /></TaskApp>
      <TaskApp $run aria-label="Opera">
        <svg width="16" height="16" viewBox="0 0 16 16" aria-hidden="true">
          <circle cx="8" cy="8" r="8" fill="#e8202f" /><ellipse cx="8" cy="8" rx="3.200" ry="5.400" fill="#331c1c" />
          <path d="M8 0a8 8 0 0 1 0 16q5-3 5-8T8 0" fill="#a8131f" opacity=".5" />
        </svg>
      </TaskApp>
    </Apps>
    <Tray>
      <svg width="18" height="18" viewBox="0 0 18 18" aria-hidden="true">
        <path d="M2 17q0-8 6-12 4-2 8-4 0 6-5 10-3 3-8 4z" fill="#8a55d6" /><path d="M2 17Q7 9 15 3" stroke="#d9c2ff" fill="none" />
      </svg>
      <Box spark />
      <svg width="18" height="18" viewBox="0 0 18 18" aria-hidden="true">
        <path d="M4 14a4 4 0 0 1 0-7 5.500 5.500 0 0 1 10 1 3.200 3.200 0 0 1 0 6z" fill="#7c7474" /><path d="M2 2l14 14" stroke="#ddd" strokeWidth="1.200" />
      </svg>
      <Status>
        <Stroke d="M10 3.500H1.500v9h10V8M4.500 15.500h6M7.500 12.500v3M11.500 1h4v4.500h-4zM13.500 5.500V15" w={1.2} s={18} />
        <svg width="18" height="16" viewBox="0 0 18 16" fill="none" stroke="#fff" strokeWidth="1.200" aria-hidden="true">
          <path d="M1.500 6H4l3.500-3.500v11L4 10H1.500zM10 5.500q2 2.500 0 5M12 3.500q4 4.500 0 9" /><path d="M14.500 2q5 6 0 12" opacity=".4" />
        </svg>
      </Status>
      <Clock>13.46.17<br />25/10/2025</Clock>
    </Tray>
  </Taskbar>
);

export default function App() {
  return (
    <Screen>
      <Global />
      <BrowserFrame />
      <Page>
        <WorldMap />
        <StatusBar><Dot />Memo(0),Deposit(9),Withdraw(0)<Refresh>Refresh</Refresh></StatusBar>
        <Columns>
          <AgentMenu />
          <Main>
            <LogTabs>{logTabs.map((t) => <LogTab key={t} href="#" $on={t === "Downline Log"}>{t}</LogTab>)}</LogTabs>
            <SearchForm />
            <PageLabel>Page1</PageLabel>
            <Pager>{["First", "1", "Next", "Last"].map((t) => <PageLink key={t} href="#" $on={t === "1"}>{t}</PageLink>)}</Pager>
            <Export>Export All Data</Export>
            <LogList />
          </Main>
        </Columns>
      </Page>
      <WindowsTaskbar />
    </Screen>
  );
}
